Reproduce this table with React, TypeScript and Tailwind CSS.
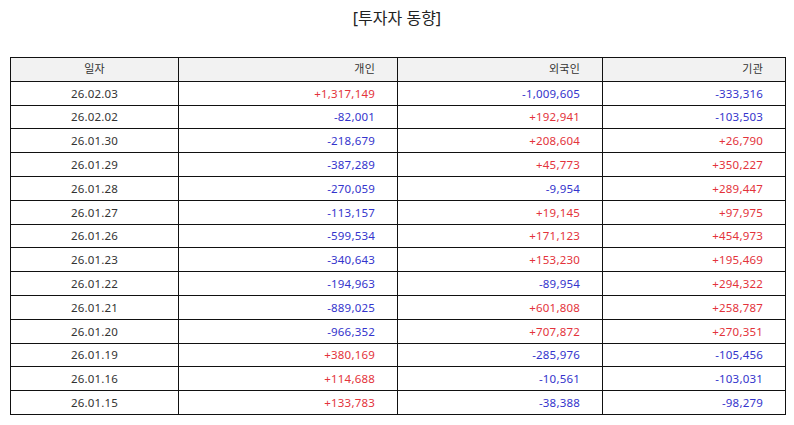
const rows: [string, string, string, string][] = [
  ['26.02.03', '+1,317,149', '-1,009,605', '-333,316'],
  ['26.02.02', '-82,001', '+192,941', '-103,503'],
  ['26.01.30', '-218,679', '+208,604', '+26,790'],
  ['26.01.29', '-387,289', '+45,773', '+350,227'],
  ['26.01.28', '-270,059', '-9,954', '+289,447'],
  ['26.01.27', '-113,157', '+19,145', '+97,975'],
  ['26.01.26', '-599,534', '+171,123', '+454,973'],
  ['26.01.23', '-340,643', '+153,230', '+195,469'],
  ['26.01.22', '-194,963', '-89,954', '+294,322'],
  ['26.01.21', '-889,025', '+601,808', '+258,787'],
  ['26.01.20', '-966,352', '+707,872', '+270,351'],
  ['26.01.19', '+380,169', '-285,976', '-105,456'],
  ['26.01.16', '+114,688', '-10,561', '-103,031'],
  ['26.01.15', '+133,783', '-38,388', '-98,279'],
]

function Num({ v }: { v: string }) {
  const color = v.startsWith('+') ? 'text-[#e3333b]' : 'text-[#3434cc]'
  return (
    <td className={`border border-[#111] text-right pr-[22px] ${color}`}>{v}</td>
  )
}

export default function App() {
  return (
    <div
      className="w-[794px] h-[425px] bg-white text-[#333] px-[10px] pt-[6px]"
      style={{ fontFamily: '"Noto Sans", "Noto Sans CJK KR", sans-serif' }}
    >
      <h1 className="text-center text-[16px] leading-[24px] text-[#222] mb-[27px]">
        [투자자 동향]
      </h1>
      <table className="w-[775px] border-collapse border border-[#111] text-[11.5px] tracking-[0.2px] table-fixed">
        <colgroup>
          <col className="w-[168px]" />
          <col className="w-[219px]" />
          <col className="w-[205px]" />
          <col className="w-[183px]" />
        </colgroup>
        <thead>
          <tr className="h-[23.8px] bg-[#f2f2f2] text-[11px]">
            <th className="border border-[#111] font-normal text-center">일자</th>
            <th className="border border-[#111] font-normal text-right pr-[22px]">개인</th>
            <th className="border border-[#111] font-normal text-right pr-[22px]">외국인</th>
            <th className="border border-[#111] font-normal text-right pr-[22px]">기관</th>
          </tr>
        </thead>
        <tbody>
          {rows.map((r) => (
            <tr key={r[0]} className="h-[23.8px]">
              <td className="border border-[#111] text-center">{r[0]}</td>
              <Num v={r[1]} />
              <Num v={r[2]} />
              <Num v={r[3]} />
            </tr>
          ))}
        </tbody>
      </table>
    </div>
  )
}
